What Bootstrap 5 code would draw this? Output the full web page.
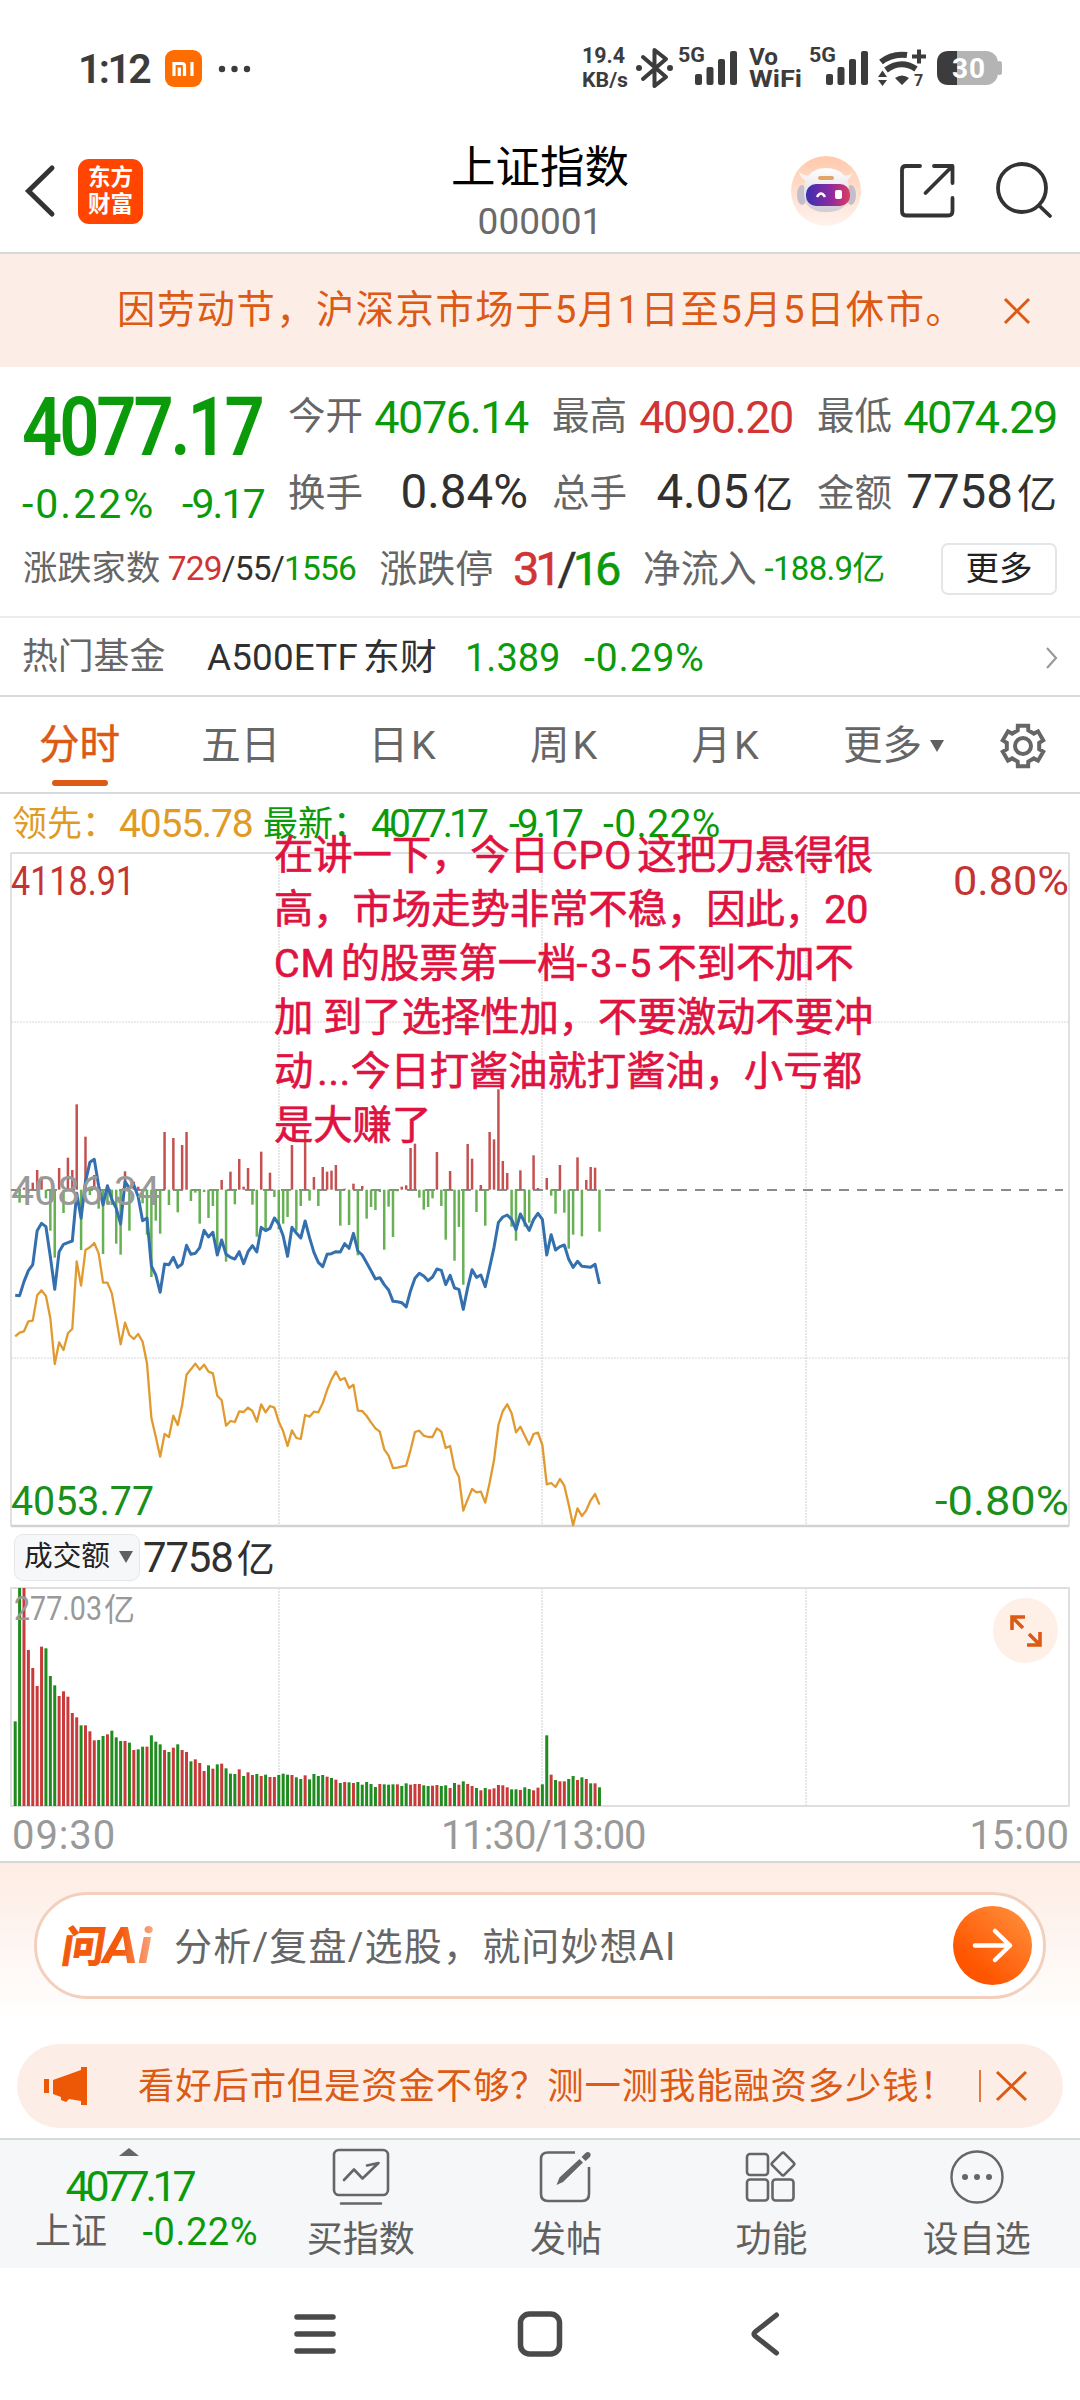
<!DOCTYPE html>
<html lang="zh-CN">
<head>
<meta charset="utf-8">
<meta name="viewport" content="width=device-width, initial-scale=1">
<title>上证指数 000001</title>
<link href="https://cdn.jsdelivr.net/npm/bootstrap@5.3.0/dist/css/bootstrap.min.css" rel="stylesheet">
<style>
:root{--up:#d03434;--down:#0a9a0a;--ink:#303030;--soft:#666;--brand:#dc5a14}
body{width:1080px;height:2400px;background:#fff;color:var(--ink);font-family:Roboto,"Noto Sans CJK SC",sans-serif;line-height:1;overflow-x:hidden;white-space:nowrap}
svg{display:block;flex:none;overflow:visible}
svg text{font-family:Roboto,"Noto Sans CJK SC",sans-serif}
.up{color:var(--up)}.down{color:var(--down)}.soft{color:var(--soft)}.brand{color:var(--brand)}
.statusbar{height:138px;padding-left:78px;padding-right:78px}
.clock{font-size:41px;font-weight:600;width:87px;letter-spacing:-2.6px;color:#3c3c3c}
.topbar{height:116px;border-bottom:2px solid #d6dad9;position:relative;padding-bottom:8px}
.applogo{width:65px;height:65px;border-radius:11px;background:#ff4500;color:#fff;font-size:22.5px;line-height:27px;font-weight:700;margin-left:22px}
.title-cn{font-size:44.5px}
.title-no{font-size:37px;color:#6a6a6a;margin-top:12px}
.title-box{top:4px}
.holiday{height:113px;background:#fceee6;font-size:38.3px;letter-spacing:1.5px;padding-left:117px}
.quote{height:251px;border-bottom:2px solid #ececec;padding:0 23px 0 23px}
.q-left{width:265px}
.q-big{font-size:81px;font-weight:600;letter-spacing:-3.6px;transform:scaleX(.87);transform-origin:0 50%;margin-top:9px;margin-left:-1px}
.q-sub{font-size:41px;margin-top:16px}
.q-pct{width:160px;letter-spacing:2px;margin-left:-1px}
.q-abs{letter-spacing:-1.9px}
.q-grid{width:769px}
.q-cell{width:240px;height:76px}
.q-mid{width:241px}
.lbl{font-size:37.5px;margin-top:2px}
.v-n{font-size:45px;letter-spacing:-1.4px;margin-top:2px}
.v-m{font-size:47.5px}
.yi{font-size:40px;margin-left:4px}
.q-top{height:164px;padding-top:11px}
.q-row3{height:74px;padding-top:1px}
.w-a{width:145px;font-size:34.3px}.w-b{width:212px;font-size:33.5px;letter-spacing:-.8px}
.w-c{width:134px;font-size:38px}.w-d{width:130px;font-size:47px;letter-spacing:-4.2px;-webkit-text-stroke:.5px}
.w-e{width:122px;font-size:38px}.w-f{width:177px;font-size:33px;letter-spacing:-.7px}
.btn-more{width:116px;height:52px;border:2px solid #e3e6e8;border-radius:7px;font-size:33.5px;padding:0;line-height:48px;color:#222}
.fund{height:79px;border-bottom:2px solid #d6dadb;padding:3px 21px 0 22px}
.f-a{width:185px;font-size:35.8px}.f-b{width:258px;font-size:36.8px;letter-spacing:.2px}.f-b .cn{margin-left:5px}.f-c{width:119px;font-size:38px}.f-d{font-size:39px;letter-spacing:.9px}
.tabs-k{height:97px;border-bottom:2px solid #d6dadb;font-size:39.5px;color:var(--soft);position:relative;padding-top:2px}
.tk{width:161.5px;text-align:center}
.tk .kk{margin-left:3px}
.tk-on{width:160px;padding-right:1px;color:var(--brand);font-size:40.5px;-webkit-text-stroke:.5px;position:relative;height:95px;line-height:95px}
.tk-on::after{content:"";position:absolute;left:52px;bottom:7px;width:56px;height:6px;border-radius:3px;background:var(--brand)}
.tk-more{width:155px;padding-left:37px}
.tri{width:0;height:0;border:7px solid transparent;border-bottom:0;border-top:12px solid #606060}
.legend-row{height:58px;padding-left:12px;font-size:35px;padding-top:3px}
.l-n{font-size:39px}
.gold{color:#e09a26}
.l-a{width:107px}.l-b{width:144px;letter-spacing:-1.2px}.l-c{width:108px}.l-d{width:138px;letter-spacing:-4px}.l-e{width:94px;letter-spacing:-3px}
.l-f{letter-spacing:.4px}
.chartbox{position:relative;height:675px}
.note-red{position:absolute;left:274px;top:-23px;font-size:39.3px;line-height:54px;color:#e0123f;-webkit-text-stroke:.7px #e0123f}
.note-red .lat{margin:0 5px 0 3px;letter-spacing:.9px}
.note-red .wide{letter-spacing:3px;margin-right:3px}
.turnover{height:60px;padding-left:14px}
.btn-vol{width:126px;height:47px;border:1px solid #e4e7ea;border-radius:9px;background:#f6f7f9;font-size:28.7px;color:#222;padding:0 6px 0 9px;margin-right:3px}
.t-v{font-size:42px;letter-spacing:-1.2px;margin-top:2px}
.t-v .yi{font-size:38px}
.volbox{position:relative;height:221px}
.expander{position:absolute;right:22px;top:11px;width:65px;height:65px;border-radius:50%;background:#feefe7}
.times{height:55px;border-bottom:2px solid #d6d6d6;color:#999;font-size:40px;padding:2px 11px 0 12px}
.t-mid{letter-spacing:-1px;margin-left:1px}
.t-s{letter-spacing:.9px}
.ai-zone{height:180px;background:linear-gradient(#fdece3,#fff 88%);padding:29px 34px 0}
.ai-pill{height:107px;border:3px solid #f3d0bd;border-radius:54px;background:#fff;padding:0 11px 0 22px}
.ai-txt{font-size:38px;margin-left:21px;letter-spacing:1.2px;padding-top:3px}
.tip-wrap{height:95px;padding:1px 17px 0}
.tip{height:84px;border-radius:42px;background:#fceee6;font-size:36.4px;letter-spacing:.82px;padding-left:26px}
.tip-txt{width:841px;margin-left:49px;padding-top:2px}
.dock{height:130px;background:#f6f7f9;border-top:2px solid #d6dadb;font-size:36px;color:#606060}
.dock-i{width:205.4px;padding-top:5px}
.dock-i span{margin-top:13px}
.dock-q{width:258px;position:relative}
.d-big{font-size:43px;letter-spacing:-4.2px;margin-top:9px}
.d-low{padding-left:35px;margin-top:5px}
.d-pct{font-size:38px;letter-spacing:.5px}
.sysnav{height:133px;padding-left:292px;padding-bottom:1px}
</style>
</head>
<body>
<div class="statusbar d-flex align-items-center justify-content-between">
  <div class="d-flex align-items-center">
    <span class="clock">1:12</span>
    <svg width="90" height="38" viewBox="0 0 90 38"><rect width="37" height="37" rx="9" fill="#ff6c00"/><path d="M9 26V13.5H17Q19.5 13.5 19.5 16V26M14.3 17.5V26M27 12V26" fill="none" stroke="#fff" stroke-width="3.2"/><g fill="#3c3c3c"><circle cx="57" cy="19" r="3.200"/><circle cx="69.500" cy="19" r="3.200"/><circle cx="82" cy="19" r="3.200"/></g></svg>
  </div>
  <svg width="420" height="50" viewBox="582 45 420 50" fill="#3c3c3c">
    <g font-weight="700">
      <text x="582" y="64" font-size="22.500" textLength="43" lengthAdjust="spacingAndGlyphs">19.4</text>
      <text x="582" y="87.500" font-size="21" textLength="46" lengthAdjust="spacingAndGlyphs">KB/s</text>
      <text x="678" y="63" font-size="21" textLength="27" lengthAdjust="spacingAndGlyphs">5G</text>
      <text x="749" y="66" font-size="24" textLength="29" lengthAdjust="spacingAndGlyphs">Vo</text>
      <text x="749" y="87.500" font-size="24" textLength="53" lengthAdjust="spacingAndGlyphs">WiFi</text>
      <text x="809" y="63" font-size="21" textLength="27" lengthAdjust="spacingAndGlyphs">5G</text>
      <text x="914" y="87" font-size="16">7</text>
    </g>
    <path d="M643 58L666 78L654.500 87V51L666 60L643 80" fill="none" stroke="#3c3c3c" stroke-width="4" stroke-linejoin="round" stroke-linecap="round"/>
    <circle cx="639" cy="69" r="3"/><circle cx="670" cy="69" r="3"/>
    <g id="sig"><rect x="695" y="75" width="7" height="11" rx="2"/><rect x="706.500" y="68" width="7" height="18" rx="2"/><rect x="718" y="60" width="7" height="26" rx="2"/><rect x="730" y="52" width="7" height="34" rx="2"/></g>
    <use href="#sig" x="131"/>
    <path d="M881 63Q892 54 907 56M886 71Q901 60 916 70" fill="none" stroke="#3c3c3c" stroke-width="6"/>
    <path d="M895 79Q902 74 909 79L902 86ZM878 78L882.500 71.500L887 78ZM878 81H887L882.500 87ZM912 55.500H926V59.500H912ZM917 50.500H921V64.500H917Z"/>
    <rect x="937" y="52" width="61" height="34" rx="12" fill="#b4b4b4"/><rect x="997" y="62" width="5" height="14" rx="2.500" fill="#b4b4b4"/>
    <path d="M957 52H949Q937 52 937 64V74Q937 86 949 86H957Z"/>
    <text x="952" y="79" font-size="28" font-weight="700" fill="#fff" textLength="33">30</text>
  </svg>
</div>

<header class="topbar d-flex align-items-center justify-content-between">
  <div class="d-flex align-items-center">
    <svg width="56" height="60" viewBox="0 0 56 60"><path d="M52 7L28.500 30L52 53" fill="none" stroke="#333" stroke-width="5" stroke-linecap="round"/></svg>
    <div class="applogo d-flex flex-column justify-content-center text-center"><span>东方</span><span>财富</span></div>
  </div>
  <div class="title-box position-absolute start-50 translate-middle-x text-center pt-1">
    <div class="title-cn text-black">上证指数</div>
    <div class="title-no">000001</div>
  </div>
  <svg width="290" height="80" viewBox="790 150 290 80">
    <defs><linearGradient id="halo" x2="0" y2="1"><stop offset="0" stop-color="#ffc9ac"/><stop offset="1" stop-color="#fff3ee"/></linearGradient><linearGradient id="visor"><stop offset="0" stop-color="#3a2eb0"/><stop offset=".55" stop-color="#8b2aa0"/><stop offset="1" stop-color="#e03a62"/></linearGradient><linearGradient id="helmet" x2="0" y2="1"><stop offset="0" stop-color="#fff"/><stop offset="1" stop-color="#cfcbd4"/></linearGradient></defs>
    <circle cx="826" cy="190" r="35" fill="url(#halo)"/>
    <path d="M799 170Q800 178 808 181L813 174Q803 176 799 170ZM853 171Q851 178 844 181L841 174Q849 176 853 171Z" fill="#f7f1f1"/>
    <ellipse cx="802" cy="194" rx="5" ry="10" fill="#c3bfca"/><ellipse cx="851" cy="194" rx="5" ry="10" fill="#c3bfca"/>
    <path d="M804 190Q804 168 826 167Q849 168 849 190Q850 211 826 211Q803 211 804 190Z" fill="url(#helmet)"/>
    <rect x="818" y="175" width="16" height="4" rx="2" fill="#e0a468"/>
    <rect x="806" y="183" width="44" height="22" rx="10" fill="url(#visor)"/>
    <path d="M817 196Q821 189 825 196" fill="none" stroke="#fff" stroke-width="2.500"/><rect x="835" y="189" width="7" height="9" rx="2" fill="#fff"/>
    <g fill="none" stroke="#333" stroke-width="3.800" stroke-linecap="round" stroke-linejoin="round"><path d="M920 165H906Q902 165 902 169V210Q902 214.500 906 214.500H948Q952.500 214.500 952.500 210V197M934 165H952.500V182M952 165.500L925.500 192"/><circle cx="1022" cy="187" r="24"/><path d="M1039 204.500L1050 215"/></g>
  </svg>
</header>

<div class="holiday d-flex align-items-center brand">
  <span>因劳动节，沪深京市场于5月1日至5月5日休市。</span>
  <svg class="ms-auto me-5" width="30" height="30" viewBox="0 0 30 30"><path d="M3 3L27 27M27 3L3 27" stroke="#dc5a14" stroke-width="3"/></svg>
</div>

<section class="quote">
  <div class="q-top d-flex">
    <div class="q-left">
      <div class="q-big down">4077.17</div>
      <div class="q-sub down d-flex"><span class="q-pct">-0.22%</span><span class="q-abs">-9.17</span></div>
    </div>
    <div class="q-grid d-flex flex-wrap justify-content-between">
      <div class="q-cell d-flex align-items-center justify-content-between"><span class="lbl soft">今开</span><span class="v-n down">4076.14</span></div>
      <div class="q-cell q-mid d-flex align-items-center justify-content-between"><span class="lbl soft">最高</span><span class="v-n up">4090.20</span></div>
      <div class="q-cell d-flex align-items-center justify-content-between"><span class="lbl soft">最低</span><span class="v-n down">4074.29</span></div>
      <div class="q-cell d-flex align-items-center justify-content-between"><span class="lbl soft">换手</span><span class="v-m">0.84%</span></div>
      <div class="q-cell q-mid d-flex align-items-center justify-content-between"><span class="lbl soft">总手</span><span class="v-m">4.05<span class="yi">亿</span></span></div>
      <div class="q-cell d-flex align-items-center justify-content-between"><span class="lbl soft">金额</span><span class="v-m">7758<span class="yi">亿</span></span></div>
    </div>
  </div>
  <div class="q-row3 d-flex align-items-center">
    <span class="w-a soft">涨跌家数</span><span class="w-b"><span class="up">729</span>/55/<span class="down">1556</span></span>
    <span class="w-c soft">涨跌停</span><span class="w-d"><span class="up">31</span>/<span class="down">16</span></span>
    <span class="w-e soft">净流入</span><span class="w-f down">-188.9亿</span>
    <button class="btn btn-more">更多</button>
  </div>
</section>

<div class="fund d-flex align-items-center">
  <span class="f-a soft">热门基金</span><span class="f-b">A500ETF<span class="cn">东财</span></span><span class="f-c down">1.389</span><span class="f-d down">-0.29%</span>
  <svg class="ms-auto" width="14" height="24" viewBox="0 0 14 24"><path d="M2 2L11 12L2 22" fill="none" stroke="#999" stroke-width="2.200"/></svg>
</div>

<nav class="tabs-k d-flex align-items-center">
  <span class="tk-on text-center">分时</span><span class="tk">五日</span><span class="tk">日<span class="kk">K</span></span><span class="tk">周<span class="kk">K</span></span><span class="tk">月<span class="kk">K</span></span>
  <span class="tk-more d-flex align-items-center">更多<i class="tri ms-2"></i></span>
  <svg class="ms-auto" width="91" height="50" viewBox="-34 -25 91 50"><path id="gear" fill="none" stroke="#666" stroke-width="4"/><circle r="8" fill="none" stroke="#666" stroke-width="4"/></svg>
</nav>

<div class="legend-row d-flex align-items-center">
  <span class="l-a gold">领先：</span><span class="l-n l-b gold">4055.78</span><span class="l-c down">最新：</span><span class="l-n l-d down">4077.17</span><span class="l-n l-e down">-9.17</span><span class="l-n l-f down">-0.22%</span>
</div>

<div class="chartbox">
  <svg id="price" width="1080" height="675" viewBox="0 852 1080 675"></svg>
  <div class="note-red">在讲一下，今日<span class="lat">CPO</span>这把刀悬得很<br>高，市场走势非常不稳，因此，20<br><span class="lat ms-0">CM</span>的股票第一档<span class="wide">-3-5</span>不到不加不<br>加 到了选择性加，不要激动不要冲<br>动<span class="lat ms-1 me-0">...</span>今日打酱油就打酱油，小亏都<br>是大赚了</div>
</div>

<div class="turnover d-flex align-items-center">
  <button class="btn btn-vol d-flex align-items-center justify-content-between">成交额<i class="tri"></i></button><span class="t-v">7758<span class="yi">亿</span></span>
</div>

<div class="volbox">
  <svg id="vol" width="1080" height="221" viewBox="0 1587 1080 221"></svg>
  <div class="expander d-flex align-items-center justify-content-center"><svg width="34" height="34" viewBox="0 0 34 34"><path d="M3 16V3H16M3 3L14 14M31 18V31H18M31 31L20 20" fill="none" stroke="#dc5a14" stroke-width="3.600"/></svg></div>
</div>

<div class="times d-flex justify-content-between align-items-center"><span class="t-s">09:30</span><span class="t-mid">11:30/13:00</span><span>15:00</span></div>

<div class="ai-zone">
  <div class="ai-pill d-flex align-items-center">
    <svg width="94" height="50" viewBox="0 -3 94 50"><defs><linearGradient id="ask"><stop offset="0" stop-color="#f35a0c"/><stop offset=".4" stop-color="#f35a0c"/><stop offset="1" stop-color="#fba783"/></linearGradient></defs>
      <text transform="translate(1 38) skewX(-9)" font-size="43" font-weight="700" fill="#f35a0c" stroke="#f35a0c" textLength="43" lengthAdjust="spacingAndGlyphs">问</text>
      <text x="44" y="39" font-size="49" font-weight="700" font-style="italic" fill="url(#ask)" textLength="49" lengthAdjust="spacingAndGlyphs">Ai</text></svg>
    <span class="ai-txt soft">分析/复盘/选股，就问妙想AI</span>
    <svg class="ms-auto" width="79" height="79" viewBox="0 0 79 79"><defs><linearGradient id="go" x1="1" y1="0" x2=".3" y2=".8"><stop offset="0" stop-color="#ff9440"/><stop offset="1" stop-color="#ff5500"/></linearGradient></defs><circle cx="39.500" cy="39.500" r="39.500" fill="url(#go)"/><path d="M22 39.500H57M42 25L57 39.500L42 54" fill="none" stroke="#fff" stroke-width="4.500" stroke-linecap="round" stroke-linejoin="round"/></svg>
  </div>
</div>

<div class="tip-wrap">
  <div class="tip d-flex align-items-center brand">
    <svg width="46" height="38" viewBox="0 0 46 38"><path d="M1 12H6V26H1ZM10 13L38 3V0H44V38H38V34L26 32L23 35L18 33V30L10 27Z" fill="#ec5805"/></svg>
    <span class="tip-txt">看好后市但是资金不够？测一测我能融资多少钱！</span>
    <svg width="50" height="36" viewBox="0 0 50 36"><path d="M1 2V34" stroke="#dc5a14" stroke-width="1.600"/><path d="M18 4L47 32M47 4L18 32" stroke="#dc5a14" stroke-width="3"/></svg>
  </div>
</div>

<div class="dock d-flex">
  <div class="dock-q text-center">
    <svg class="mx-auto mt-2" width="20" height="8" viewBox="0 0 20 8"><path d="M0 8L10 0L20 8Z" fill="#666"/></svg>
    <div class="d-big down">4077.17</div>
    <div class="d-low d-flex justify-content-between align-items-center"><span>上证</span><span class="d-pct down">-0.22%</span></div>
  </div>
  <div class="dock-i d-flex flex-column align-items-center">
    <svg width="60" height="64" viewBox="331 2145 60 64" fill="none" stroke="#666" stroke-width="2.600" stroke-linecap="round" stroke-linejoin="round"><rect x="334" y="2150" width="54" height="45" rx="5"/><path d="M341 2203.500H381M344 2180L354 2169.500L362.500 2178.500L378.500 2163L367 2165.500"/></svg>
    <span>买指数</span></div>
  <div class="dock-i d-flex flex-column align-items-center">
    <svg width="60" height="64" viewBox="537 2145 60 64"><path d="M576 2152.500H549Q542 2152.500 542 2159V2194Q542 2201 549 2201H583Q590 2201 590 2194V2167" fill="none" stroke="#666" stroke-width="2.600"/><path d="M557.500 2185L560.500 2177.500L580.500 2159L584 2162.500L564 2182ZM582.500 2157L586.500 2153Q589 2151 591 2153Q592.500 2155 590.500 2157.500L586.500 2161Z" fill="#666"/></svg>
    <span>发帖</span></div>
  <div class="dock-i d-flex flex-column align-items-center">
    <svg width="60" height="64" viewBox="742 2145 60 64" fill="none" stroke="#666" stroke-width="2.600"><rect x="748" y="2154" width="21" height="21" rx="3"/><rect x="748" y="2179.500" width="21" height="21" rx="3"/><rect x="773.500" y="2179.500" width="21" height="21" rx="3"/><rect x="775.500" y="2155.500" width="17" height="17" rx="2" transform="rotate(45 784 2164)"/></svg>
    <span>功能</span></div>
  <div class="dock-i d-flex flex-column align-items-center">
    <svg width="60" height="64" viewBox="-30 -32 60 64"><circle r="25.500" fill="none" stroke="#666" stroke-width="2.400"/><g fill="#666"><circle cx="-12" r="3"/><circle r="3"/><circle cx="12" r="3"/></g></svg>
    <span>设自选</span></div>
</div>

<div class="sysnav d-flex align-items-center">
  <svg width="490" height="50" viewBox="292 2309 490 50" fill="none" stroke="#4a4a4a" stroke-linecap="round" stroke-linejoin="round"><path d="M297 2317H333M297 2334H333M297 2351H333" stroke-width="5.500"/><rect x="520.500" y="2314" width="39" height="40" rx="9" stroke-width="5.500"/><path d="M776.500 2315L755 2332Q753 2334 755 2336L776.500 2353" stroke-width="5"/></svg>
</div>

<script src="https://cdn.jsdelivr.net/npm/bootstrap@5.3.0/dist/js/bootstrap.bundle.min.js"></script>
<script>
// minute series in chart units: v = (y - 1060) * 3, x step = one minute
const X = i => 15.2 + i * 4.393, Y = v => 1060 + v / 3;
const momentum = [389,428,383,400,368,330,350,415,512,593,324,459,293,330,133,570,230,405,345,446,582,430,435,551,584,334,512,365,380,430,524,651,482,521,216,435,234,457,255,216,423,398,491,396,474,438,565,360,605,335,433,297,380,324,434,530,275,508,338,411,508,491,471,255,512,438,210,422,351,438,321,335,332,315,497,386,495,371,586,378,476,441,450,396,569,440,531,394,380,376,264,251,413,449,441,415,276,438,539,333,602,501,674,252,296,456,375,497,216,238,88,303,339,500,542,331,500,488,286,384,389,354,407,461,315,458,566,524,292,529,360,321,323,515];
const latest = [706,707,665,632,614,512,490,500,590,688,575,553,548,543,400,475,365,307,298,378,435,377,418,445,492,365,385,375,410,482,474,618,645,697,612,614,592,622,612,556,583,580,563,511,531,517,585,540,583,592,597,575,611,575,557,576,502,512,505,474,492,528,589,502,519,534,483,533,577,607,620,583,581,575,576,551,565,520,573,585,608,632,657,653,674,690,724,725,728,741,692,655,640,648,662,651,627,631,674,646,684,688,748,683,629,652,645,680,622,562,487,471,465,478,509,462,488,511,479,460,478,585,524,570,560,555,598,622,604,619,620,622,613,672];
const lead = [829,818,814,784,782,706,691,708,775,912,847,870,820,806,604,677,570,562,549,580,668,668,700,775,853,788,825,837,822,845,910,1074,1130,1190,1122,1131,1067,1095,1036,944,928,911,929,914,935,940,1007,1021,1097,1083,1086,1054,1056,1043,1053,1085,1033,1057,1038,1043,1085,1114,1158,1111,1134,1137,1065,1070,1055,1057,1030,990,958,935,960,954,984,974,1052,1053,1068,1087,1105,1115,1168,1187,1224,1223,1220,1217,1170,1116,1112,1127,1131,1131,1105,1115,1164,1158,1225,1250,1352,1318,1287,1297,1295,1328,1268,1200,1095,1053,1033,1060,1117,1100,1127,1154,1122,1118,1155,1273,1269,1281,1257,1277,1334,1396,1345,1368,1351,1321,1302,1334];
const volume = "484g 84g 84r 270r 324r 378r 260r 265g 348g 376g 408r 394r 410r 459r 472r 496g 496r 514r 541r 540g 528g 523r 512g 532g 543g 543r 548g 570r 568g 560g 560r 526g 545g 553g 570r 576g 563r 553g 570r 576r 604g 598r 609r 633r 616g 626r 613g 611r 625g 641g 642g 628r 648g 637r 645r 642g 648r 644g 651r 651r 645g 641g 644g 645r 652g 657g 646r 658g 642g 648g 645g 650r 654g 659r 669g 666r 667g 669r 666g 674g 666g 672g 681g 672r 673g 674g 673g 673r 678g 670g 674r 672r 672r 676g 678g 677r 675r 678g 676g 684r 669g 674r 664g 672r 678r 684g 691r 684g 688r 685r 675r 676r 682r 688g 688g 690r 682g 687g 691r 683r 673g 526g 644r 660g 664r 664r 657g 648g 660r 652g 657r 670g 670r 682g".split(" ");
const line = (x1,y1,x2,y2,c,w,d='') => `<path d="M${x1} ${y1}L${x2} ${y2}" stroke="${c}" stroke-width="${w}" stroke-dasharray="${d}"/>`;
const label = (x,y,w,s,c,t,a='start') => `<text x="${x}" y="${y}" font-size="${s}" fill="${c}" text-anchor="${a}" textLength="${w}" lengthAdjust="spacingAndGlyphs">${t}</text>`;
const poly = (a,c,w) => `<polyline points="${a.map((v,i)=>X(i)+','+Y(v)).join(' ')}" fill="none" stroke="${c}" stroke-width="${w}" stroke-linejoin="round"/>`;
let s = '';
for (const x of [279,542,806]) s += line(x,853,x,1525,'#d8d8d8',1.2,'2 1');
for (const y of [1022,1358]) s += line(11,y,1069,y,'#d8d8d8',1.2,'2 1');
s += line(11,853,1069,853,'#d0d4d4',1.6) + line(11,853,11,1526,'#dadada',1.6) + line(1069,853,1069,1526,'#dadada',1.6) + line(11,1526,1069,1526,'#d2d2d2',2.4);
s += line(11,1190,1063,1190,'#8a8a8a',1.8,'10 8');
momentum.forEach((v,i)=>{ s += line(X(i),1189.7,X(i),Y(v),v<389?'#c65050':'#67b053',2.5); });
s += poly(latest,'#3470ae',3) + poly(lead,'#e09a30',2.3);
s += label(11,895,124,41,'#c43434','4118.91') + label(1069,895,116,41,'#c43434','0.80%','end');
s += label(11,1205,149,41,'#999','4086.34') + label(11,1515,143,41,'#1a8f1a','4053.77') + label(1069,1515,134,41,'#1a8f1a','-0.80%','end');
document.getElementById('price').innerHTML = s;
s = '';
for (const x of [279,542,806]) s += line(x,1588,x,1805,'#d8d8d8',1.2,'2 1');
s += '<rect x="11" y="1588" width="1058" height="218" fill="none" stroke="#dcdcdc" stroke-width="1.8"/>';
volume.forEach((v,i)=>{ const y = 1560 + parseInt(v)/3; s += `<rect x="${X(i)-1.5}" y="${y}" width="3" height="${1806-y}" fill="${v.endsWith('g')?'#1f8c1f':'#c93b3b'}"/>`; });
s += label(14,1620,88,33,'#999','277.03') + label(104,1621,31,32,'#999','亿');
document.getElementById('vol').innerHTML = s;
// six-tooth cog outline
let g = '';
for (let k=0;k<6;k++) for (const [a,r] of [[-15,16.5],[-15,21],[15,21],[15,16.5]]) { const t=(k*60+a*(r>20?.95:1.25)-90)*Math.PI/180; g += (g?'L':'M')+(r*Math.cos(t)).toFixed(2)+' '+(r*Math.sin(t)).toFixed(2); }
document.getElementById('gear').setAttribute('d', g+'Z');
</script>
</body>
</html>
